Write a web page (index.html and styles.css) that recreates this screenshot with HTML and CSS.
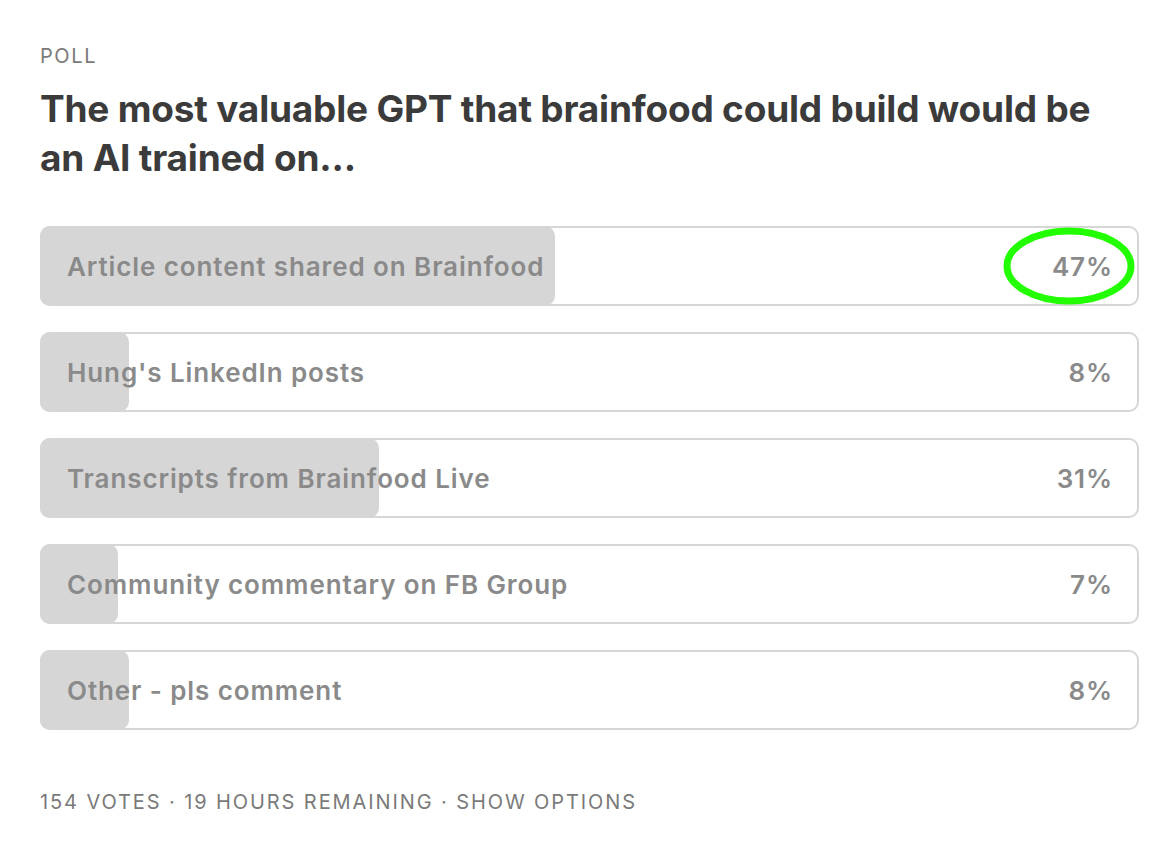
FILE: index.html
```html
<!DOCTYPE html>
<html lang="en">
  <head>
    <meta charset="UTF-8" />
    <meta name="viewport" content="width=device-width, initial-scale=1.0" />
    <title>Poll</title>
    <link rel="stylesheet" href="styles.css">
  </head>
  <body>
    <div class="poll">
      <div class="poll-label">POLL</div>
      <h1 class="poll-title">The most valuable GPT that brainfood could build would be an AI trained on...</h1>

      <div class="options">
        <div class="option">
          <div class="fill" style="width: 47%"></div>
          <span class="opt-text">Article content shared on Brainfood</span>
          <span class="opt-pct">47%</span>
          <svg class="circle" width="136" height="86" viewBox="0 0 136 86">
            <ellipse cx="68" cy="43" rx="62" ry="35" fill="none" stroke="#22ff00" stroke-width="7" />
          </svg>
        </div>
        <div class="option">
          <div class="fill" style="width: 8.1%"></div>
          <span class="opt-text">Hung's LinkedIn posts</span>
          <span class="opt-pct">8%</span>
        </div>
        <div class="option">
          <div class="fill" style="width: 31%"></div>
          <span class="opt-text">Transcripts from Brainfood Live</span>
          <span class="opt-pct">31%</span>
        </div>
        <div class="option">
          <div class="fill" style="width: 7.1%"></div>
          <span class="opt-text">Community commentary on FB Group</span>
          <span class="opt-pct">7%</span>
        </div>
        <div class="option">
          <div class="fill" style="width: 8.1%"></div>
          <span class="opt-text">Other - pls comment</span>
          <span class="opt-pct">8%</span>
        </div>
      </div>

      <div class="poll-footer">154 VOTES · 19 HOURS REMAINING · SHOW OPTIONS</div>
    </div>
  </body>
</html>
```

FILE: styles.css
```css
* {
  padding: 0;
  margin: 0;
  box-sizing: border-box;
}

body {
  font-family: Inter, "Noto Sans", sans-serif;
  background-color: #ffffff;
  color: #3b3b3b;
}

.poll {
  padding: 44px 35px 0 40px;
}

.poll-label {
  font-size: 20px;
  letter-spacing: 1.6px;
  color: #7a7a7a;
  line-height: 24px;
}

.poll-title {
  margin-top: 16px;
  font-size: 37px;
  font-weight: 700;
  line-height: 49px;
  letter-spacing: -0.2px;
  color: #3b3b3b;
}

.options {
  margin-top: 44px;
  display: flex;
  flex-direction: column;
  gap: 26px;
}

.option {
  position: relative;
  height: 80px;
  border: 2px solid #d6d6d6;
  border-radius: 10px;
  display: flex;
  align-items: center;
  justify-content: space-between;
  padding: 0 24px 0 25px;
  font-size: 26px;
  font-weight: 600;
  letter-spacing: 0.9px;
  color: #8a8a8a;
}

.fill {
  position: absolute;
  left: -2px;
  top: -2px;
  bottom: -2px;
  background-color: #d6d6d6;
  border-radius: 10px;
}

.opt-text,
.opt-pct {
  position: relative;
}

.circle {
  position: absolute;
  right: 0;
  top: -5px;
}

.poll-footer {
  margin-top: 60px;
  font-size: 20px;
  letter-spacing: 1.9px;
  color: #7a7a7a;
}
```
